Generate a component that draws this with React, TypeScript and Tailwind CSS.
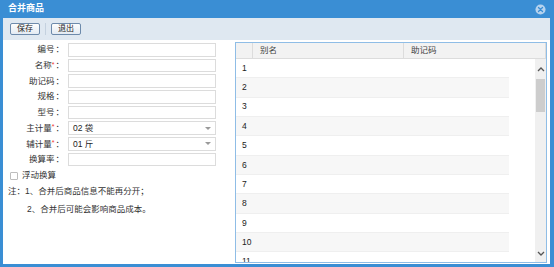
import React from "react";

const fields: { label: string; required?: boolean; value?: string; select?: boolean }[] = [
  { label: "编号" },
  { label: "名称", required: true },
  { label: "助记码" },
  { label: "规格" },
  { label: "型号" },
  { label: "主计量", required: true, value: "02 袋", select: true },
  { label: "辅计量", required: true, value: "01 斤", select: true },
  { label: "换算率" },
];

const rows = [1, 2, 3, 4, 5, 6, 7, 8, 9, 10, 11];

const CloseIcon = () => (
  <svg width="11" height="11" viewBox="0 0 12 12">
    <circle cx="6" cy="6" r="5.5" fill="#b7d3ee" />
    <path d="M3.8 3.8 L8.2 8.2 M8.2 3.8 L3.8 8.2" stroke="#3a8ed4" strokeWidth="1.4" strokeLinecap="round" />
  </svg>
);

const Chevron = ({ up }: { up?: boolean }) => (
  <svg width="8" height="5" viewBox="0 0 8 5">
    <path d={up ? "M1 4 L4 1 L7 4" : "M1 1 L4 4 L7 1"} fill="none" stroke="#555" strokeWidth="1.3" />
  </svg>
);

export default function App() {
  return (
    <div
      className="w-[554px] h-[267px] bg-[#3a8ed4] flex flex-col pl-[3px] pr-[4px] pb-[3px] overflow-hidden"
      style={{ fontFamily: '"Liberation Sans", "Noto Sans CJK SC", sans-serif' }}
    >
      {/* title */}
      <div className="h-[18px] flex items-center justify-between pl-[5px] pr-[4px] text-white text-[9px] font-bold">
        <span>合并商品</span>
        <CloseIcon />
      </div>

      <div className="flex-1 flex flex-col bg-white min-h-0">
        {/* toolbar */}
        <div className="h-[22px] bg-[#dfe8f1] flex items-center pl-[7px] gap-[5px]">
          <button className="h-[12px] w-[30px] border border-[#6d8aab] rounded-[2px] bg-gradient-to-b from-[#fdfdfd] to-[#e4ebf3] text-[8px] leading-none text-[#222]">
            保存
          </button>
          <span className="w-px h-[12px] bg-[#c4d1df]" />
          <button className="h-[12px] w-[30px] border border-[#6d8aab] rounded-[2px] bg-gradient-to-b from-[#fdfdfd] to-[#e4ebf3] text-[8px] leading-none text-[#222]">
            退出
          </button>
        </div>

        <div className="flex-1 flex min-h-0">
          {/* form */}
          <div className="w-[232px] flex flex-col pt-[3px] text-[8.5px] text-[#333]">
            {fields.map((f) => (
              <div key={f.label} className="h-[15.7px] flex items-start">
                <div className="w-[61px] h-[13.5px] flex items-center justify-end">
                  <span>{f.label}</span>
                  {f.required && <span className="text-[#e33] text-[7px] self-start mt-[1px]">*</span>}
                  <span className="ml-[1px]">：</span>
                </div>
                <div className="ml-[4px] w-[148px] h-[13.5px] border border-[#dcdcdc] flex items-center justify-between px-[4px] text-[8.5px] text-[#222]">
                  <span>{f.value ?? ""}</span>
                  {f.select && (
                    <svg width="6" height="3" viewBox="0 0 6 3">
                      <path d="M0 0 L6 0 L3 3 Z" fill="#9a9a9a" />
                    </svg>
                  )}
                </div>
              </div>
            ))}
            <div className="flex items-center mt-[2px] ml-[7px] h-[10px]">
              <span className="w-[8px] h-[8px] border border-[#bdbdbd] rounded-[1px] bg-white" />
              <span className="ml-[4px] text-[8.5px]">浮动换算</span>
            </div>
            <div className="mt-[1px] ml-[5px] text-[8.5px] leading-[18px]">
              <div>注：1、合并后商品信息不能再分开；</div>
              <div className="pl-[19px]">2、合并后可能会影响商品成本。</div>
            </div>
          </div>

          {/* grid */}
          <div className="w-[312px] mt-[2px] mb-[1px] border border-[#8fbde6] flex flex-col min-h-0">
            <div className="h-[16px] flex bg-[#f2f2f2] border-b border-[#dcdcdc] text-[8.5px] text-[#444] shrink-0">
              <div className="w-[17px] border-r border-[#dcdcdc]" />
              <div className="w-[151px] border-r border-[#dcdcdc] flex items-center pl-[7px]">别名</div>
              <div className="flex-1 flex items-center pl-[7px] border-r border-[#dcdcdc]">助记码</div>
            </div>
            <div className="flex-1 flex min-h-0">
              <div className="flex-1 overflow-hidden">
                {rows.map((n) => (
                  <div
                    key={n}
                    className={`w-[273px] h-[19.35px] flex items-center border-b border-[#efefef] text-[8.5px] text-[#222] ${
                      n % 2 === 0 ? "bg-[#f7f7f7]" : "bg-white"
                    }`}
                  >
                    <span className="pl-[6px]">{n}</span>
                  </div>
                ))}
              </div>
              <div className="w-[11px] bg-[#f0f0f0] flex flex-col items-center">
                <div className="h-[20px] flex items-center justify-center">
                  <Chevron up />
                </div>
                <div className="w-[9px] h-[33px] bg-[#cdcdcd]" />
                <div className="flex-1" />
                <div className="h-[18px] flex items-center justify-center">
                  <Chevron />
                </div>
              </div>
            </div>
          </div>
          <div className="flex-1" />
        </div>
      </div>
    </div>
  );
}
